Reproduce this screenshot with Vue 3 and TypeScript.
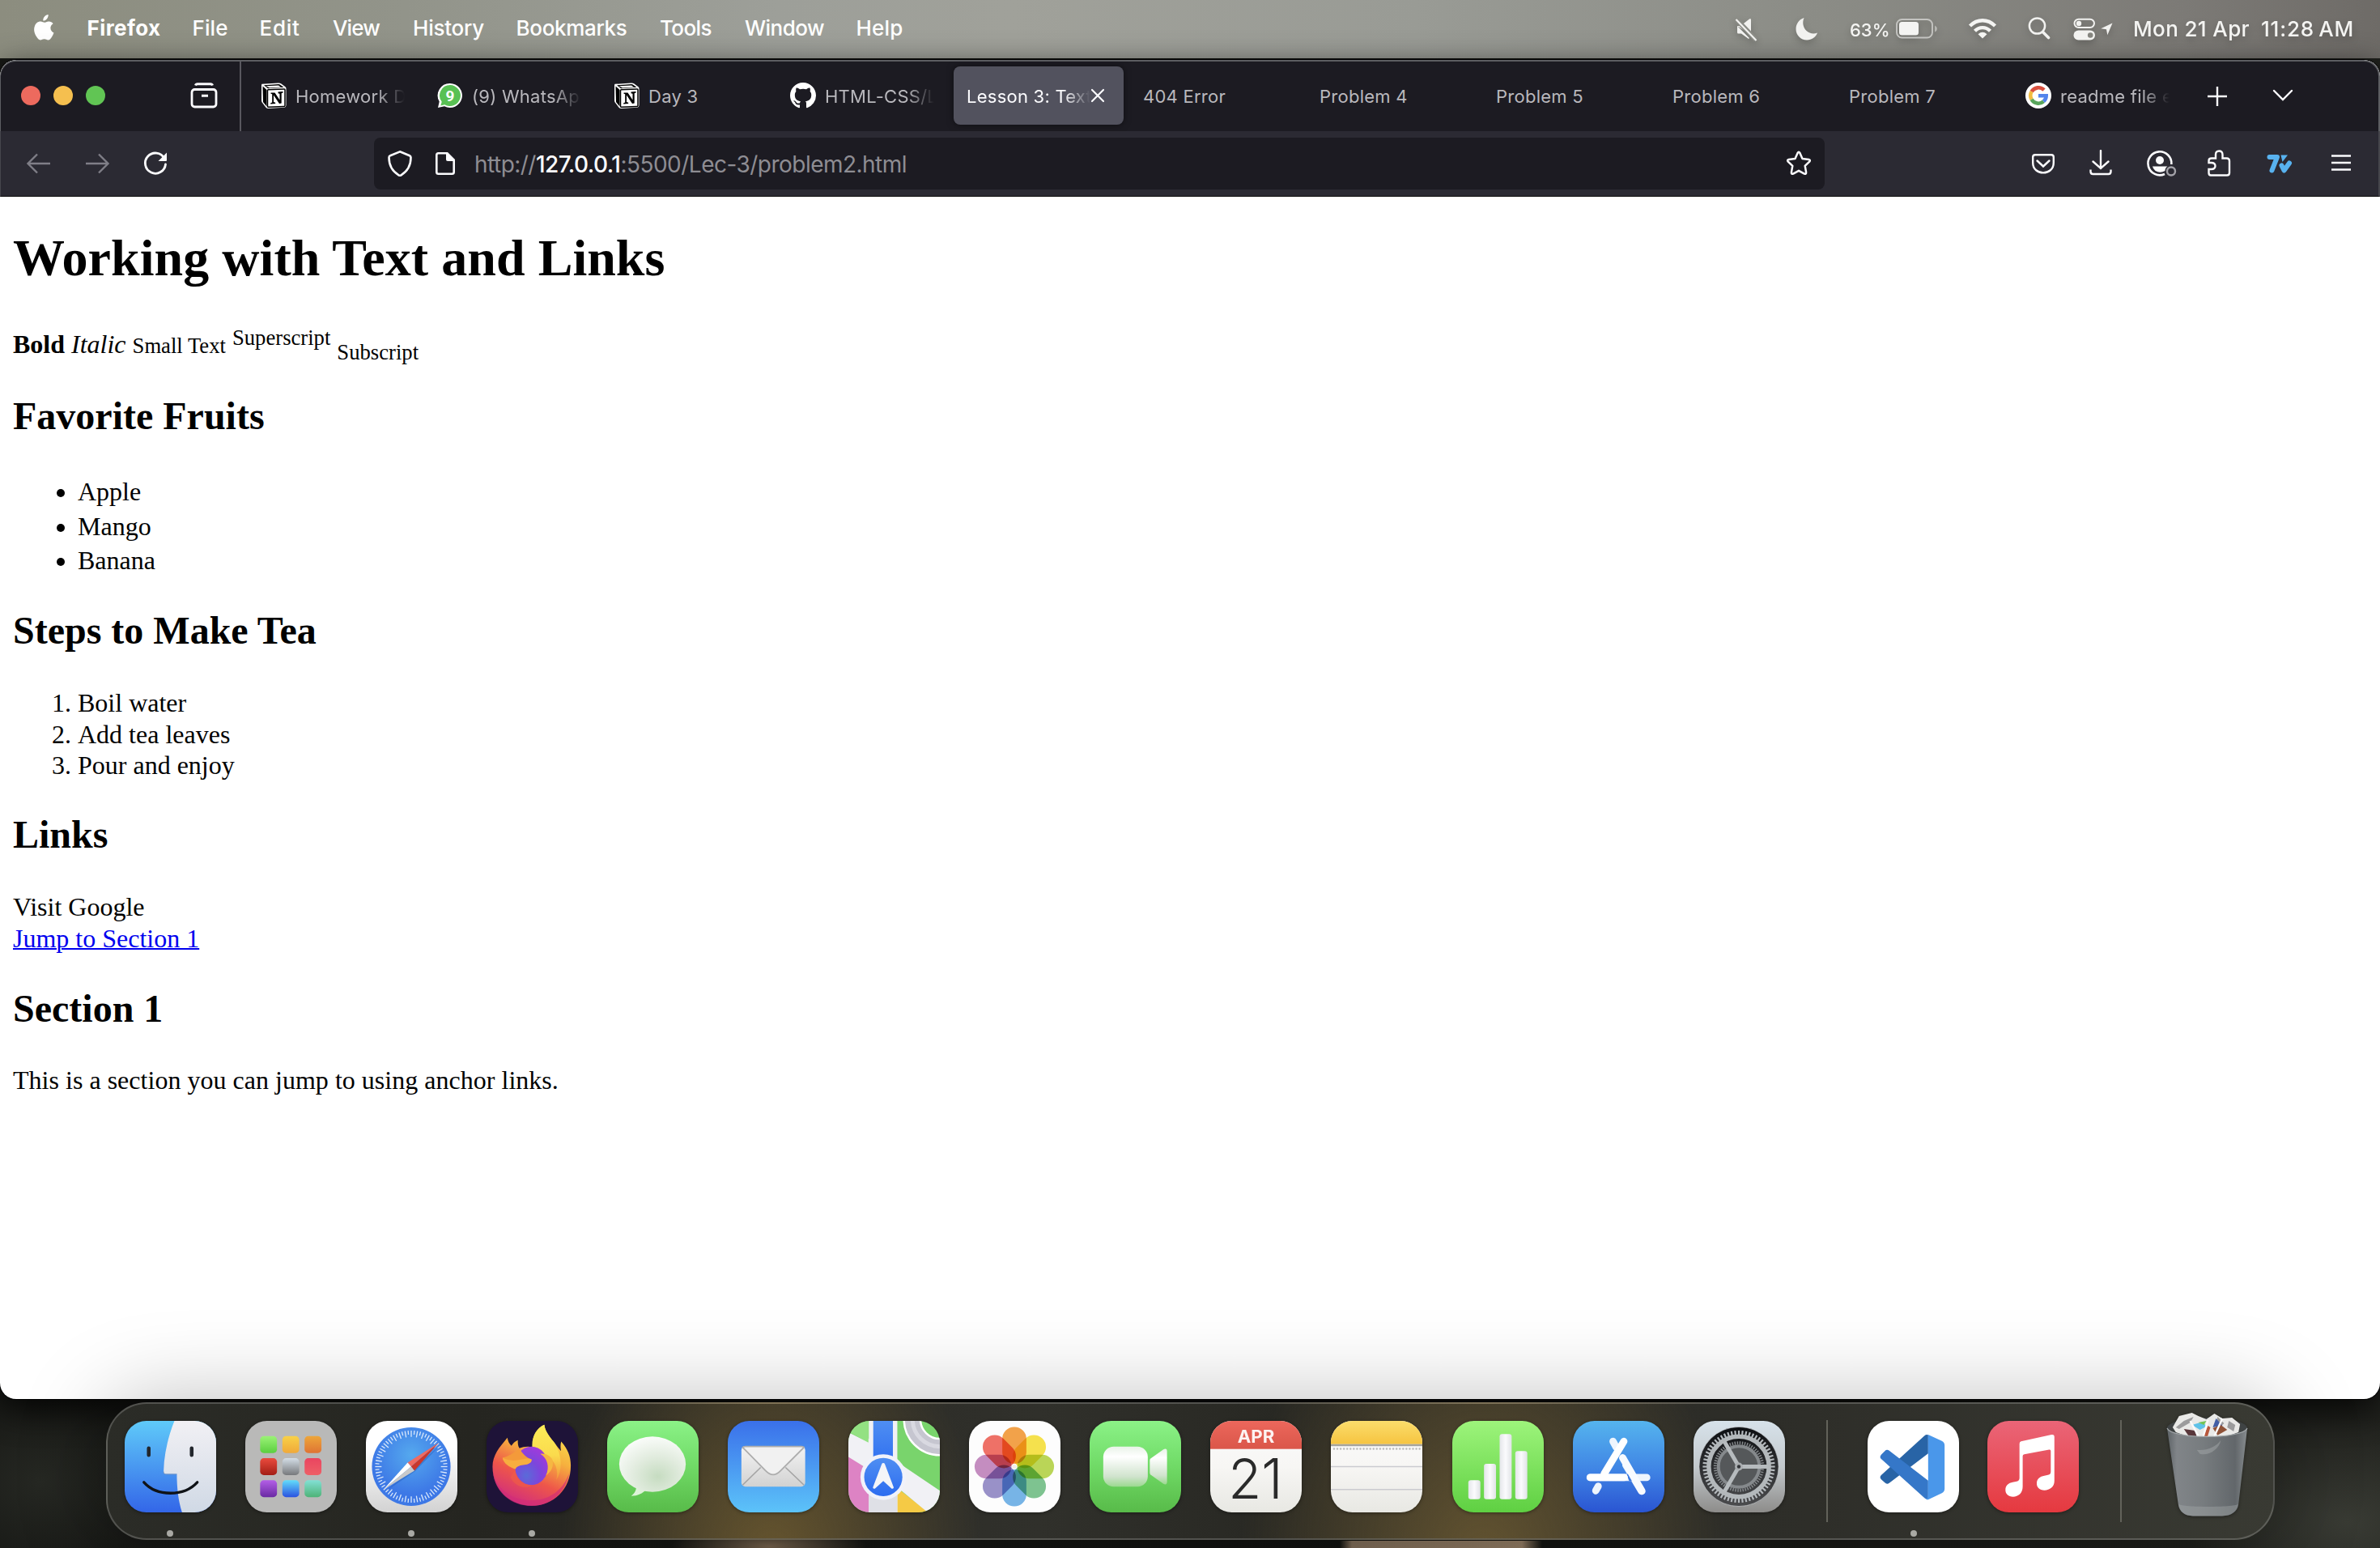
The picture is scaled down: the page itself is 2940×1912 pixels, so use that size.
<script setup lang="ts">
interface MenuEntry { label: string; pitch: number; width: number; bold?: boolean }
interface Tab { title: string; icon?: 'notion' | 'whatsapp' | 'github' | 'google'; active?: boolean; faded?: boolean }

const menu: MenuEntry[] = [
  { label: 'Firefox', pitch: 130, width: 91, bold: true },
  { label: 'File', pitch: 83, width: 44 },
  { label: 'Edit', pitch: 90.5, width: 50 },
  { label: 'View', pitch: 99, width: 58 },
  { label: 'History', pitch: 127.5, width: 88 },
  { label: 'Bookmarks', pitch: 177.5, width: 137 },
  { label: 'Tools', pitch: 105, width: 64 },
  { label: 'Window', pitch: 137.5, width: 98 },
  { label: 'Help', pitch: 80, width: 58 },
]

const tabs: Tab[] = [
  { title: 'Homework D', icon: 'notion', faded: true },
  { title: '(9) WhatsAp', icon: 'whatsapp', faded: true },
  { title: 'Day 3', icon: 'notion' },
  { title: 'HTML-CSS/L', icon: 'github', faded: true },
  { title: 'Lesson 3: Text', active: true, faded: true },
  { title: '404 Error' },
  { title: 'Problem 4' },
  { title: 'Problem 5' },
  { title: 'Problem 6' },
  { title: 'Problem 7' },
  { title: 'readme file e', icon: 'google', faded: true },
]

const padColors = [
  ['#9bf277', '#5bcf3f'], ['#f8d148', '#f0a93a'], ['#eda63a', '#df7434'],
  ['#ea4a3d', '#a31f16'], ['#d3dde6', '#77797c'], ['#ea4560', '#ee5f66'],
  ['#b35ee6', '#6a2aa3'], ['#62dcfb', '#2b52e0'], ['#82e0d4', '#4eb377'],
]
const petals = ['#f39b3a', '#f7e13e', '#b6d44a', '#74c088', '#6cb0e6', '#9189c6', '#c184bd', '#ef665b']
const ticks = Array.from({ length: 72 }, (_, i) => i)
const teeth = Array.from({ length: 60 }, (_, i) => i)
const noteDots = Array.from({ length: 27 }, (_, i) => 4 + i * 4.1)

// Spreads a label's letters so that it takes the given advance width.
const vFit = {
  mounted(el: HTMLElement, binding: { value: number }) {
    const count = (el.textContent ?? '').trim().length
    const natural = el.getBoundingClientRect().width
    el.style.letterSpacing = `${(binding.value - natural) / count}px`
  },
}
</script>

<template>
  <div class="screen">
    <header class="menubar">
      <svg class="apple" width="28" height="33" viewBox="0 0 28 33">
        <path fill="#fff" d="M19.6 0c.3 2-.5 3.900-1.700 5.300-1.100 1.400-2.900 2.500-4.600 2.300-.3-1.900.6-3.900 1.700-5.100C16.100 1.200 18.100.2 19.600 0zM25.600 11.200c-2 1.300-3.200 3-3.200 5.400 0 2.700 1.600 4.900 4.100 5.900-.6 1.900-1.500 3.700-2.700 5.400-1.200 1.700-2.400 3.500-4.400 3.500-1.900 0-2.500-1.200-4.800-1.200-2.200 0-2.900 1.200-4.700 1.200-1.900.1-3.300-1.900-4.500-3.600C2.800 24.200 1 18.700 3 14c1.100-3.300 4-5.500 7.100-5.500 2 0 3.600 1.300 4.800 1.300 1.200 0 3.100-1.500 5.500-1.400 2.100.1 4 1 5.200 2.800z" />
      </svg>
      <nav class="menu">
        <div v-for="m in menu" :key="m.label" class="menu-item" :style="{ width: m.pitch + 'px' }">
          <span v-fit="m.width" :class="{ bold: m.bold }">{{ m.label }}</span>
        </div>
      </nav>
      <div class="status">
        <svg class="s-mute" width="28" height="30" viewBox="0 0 28 30">
          <path d="M3 10h4L18 1.500Q20 0 20 3v18zM3 10v8q0 1.500 1.500 1.500H8l9 6.500 1-1z" fill="#f2f2f0" />
          <path d="M1.500 1.500 26 27" stroke="#8b8c86" stroke-width="6" />
          <path d="M1.500 2 26.500 28" stroke="#f2f2f0" stroke-width="2.200" />
        </svg>
        <svg class="s-moon" width="30" height="30" viewBox="0 0 30 30"><path d="M11.500 1C9 7 10.500 13 14.500 17c3.800 3.600 9 4.300 13.500 2.500C26 25 21 28.500 15 28.500 7.500 28.500 1.500 22.500 1.500 15 1.500 8.500 5.500 3 11.500 1z" fill="#f2f2f0" /></svg>
        <span v-fit="49" class="pct">63%</span>
        <svg class="s-batt" width="52" height="26" viewBox="0 0 52 26">
          <rect x="1" y="1" width="44" height="22.500" rx="6.500" fill="none" stroke="#c4c4c1" stroke-width="1.900" />
          <rect x="4" y="4" width="24" height="16.500" rx="3.500" fill="#f4f4f2" />
          <path d="M48 8.500q3 1.500 3 4t-3 4z" fill="#b6b6b2" />
        </svg>
        <svg class="s-wifi" width="36" height="28" viewBox="0 0 36 28">
          <g fill="none" stroke="#f4f4f2" stroke-width="4.400">
            <path d="M2.500 11C11.500 2 24.500 2 33.500 11" /><path d="M8.500 17.200C14 11.700 22 11.700 27.500 17.200" />
          </g>
          <path d="M12.500 21.200q5.500-4.800 11 0L18 26.500z" fill="#f4f4f2" />
        </svg>
        <svg class="s-search" width="28" height="28" viewBox="0 0 28 28"><g fill="none" stroke="#f2f2f0"><circle cx="11.500" cy="11" r="9.600" stroke-width="2.500" /><path d="m18.500 18.500 7 7" stroke-width="3.600" stroke-linecap="round" /></g></svg>
        <svg class="s-cc" width="28" height="28" viewBox="0 0 28 28">
          <rect x="1.500" y="1.700" width="24.500" height="10.300" rx="5.150" fill="none" stroke="#f2f2f0" stroke-width="2" />
          <circle cx="7" cy="7" r="3.200" fill="#f2f2f0" />
          <rect x=".5" y="15.500" width="26.500" height="12" rx="6" fill="#f2f2f0" />
          <circle cx="21.200" cy="21.500" r="3.300" fill="#85857f" />
        </svg>
        <svg class="s-loc" width="15" height="16" viewBox="0 0 15 16"><path d="M14.500.5 8.300 15.200 7 8.300.3 7.200z" fill="#f2f2f0" /></svg>
        <span v-fit="144" class="date">Mon 21 Apr</span>
        <span v-fit="115" class="time">11:28&#8201;AM</span>
      </div>
    </header>

    <section class="window">
      <div class="tabstrip">
        <div class="lights"><i class="red"></i><i class="yellow"></i><i class="green"></i></div>
        <svg class="box-icon" width="34" height="32" viewBox="0 0 34 32">
          <g fill="none" stroke="#fbfbfe"><rect x="2" y="8.500" width="30" height="21.500" rx="3.500" stroke-width="2.800" /><path d="M6.500 3.500Q7 1.800 9 1.800h16q2 0 2.500 1.700" stroke-width="3" /><path d="M14 16.200h8" stroke-width="3" /></g>
        </svg>
        <div class="strip-line"></div>
        <div class="tabs">
          <div v-for="t in tabs" :key="t.title" class="tab" :class="{ active: t.active }">
            <svg v-if="t.icon === 'notion'" class="fav" viewBox="0 0 32 32">
              <path d="M1.500 1.800 22 .5q2 0 3.500 1l5 3.700q1 .9 1 2.300v20.500q0 2.500-2.500 2.700L9.500 32q-2 0-3-1.300l-4-5.200Q1 24 1 22.500V4q0-2 .5-2.200z" fill="#fff" />
              <path d="M4 3.300 22 2.100q1.500 0 2.500.8l4 2.900L9 7.200z" fill="#000" /><path d="M6.500 4.300 22 3.400l3 2-14 1z" fill="#fff" />
              <path d="M2.500 4.500 7.500 9v20.500L3 24z" fill="#000" />
              <rect x="8.500" y="8" width="21.500" height="21.500" rx="1" fill="#fff" stroke="#000" stroke-width="1.500" transform="skewY(-2) translate(0 1)" />
              <path d="M12.500 12.500h5l6 9v-7.700l-2-.6v-1.600l6-.5v1.400l-1.800.8v12.200l-2.700.4-7-10.500v8.700l2.200.7v1.300l-6 .4v-1.300l2-.8V14.200l-1.700-.4z" fill="#000" />
            </svg>
            <svg v-else-if="t.icon === 'whatsapp'" class="fav" viewBox="0 0 32 32">
              <path d="M16 1a15 15 0 1 1-7 28.300L1 31l1.700-7.500A15 15 0 0 1 16 1z" fill="#fff" />
              <path d="M16 3a13 13 0 1 1-6.700 24.200l-5 1.200 1.400-4.600A13 13 0 0 1 16 3z" fill="#59c154" />
              <text x="16" y="22.500" text-anchor="middle" font-family="Roboto, sans-serif" font-weight="700" font-size="19" letter-spacing="0" fill="#fff">9</text>
            </svg>
            <svg v-else-if="t.icon === 'github'" class="fav" viewBox="0 0 16 16">
              <path fill="#fff" d="M8 0C3.580 0 0 3.580 0 8c0 3.540 2.290 6.530 5.470 7.590.4.070.55-.17.55-.38 0-.19-.01-.82-.01-1.490-2.010.37-2.530-.49-2.690-.94-.09-.23-.48-.94-.82-1.130-.28-.15-.68-.52-.01-.53.63-.01 1.080.58 1.230.82.72 1.210 1.870.87 2.330.66.070-.52.28-.87.51-1.070-1.780-.2-3.640-.89-3.640-3.950 0-.87.31-1.590.82-2.150-.08-.2-.36-1.020.08-2.120 0 0 .67-.21 2.200.82.64-.18 1.320-.27 2-.27s1.360.09 2 .27c1.530-1.040 2.200-.82 2.200-.82.44 1.100.16 1.920.08 2.120.51.56.82 1.270.82 2.150 0 3.070-1.870 3.750-3.650 3.950.29.25.54.73.54 1.480 0 1.070-.01 1.930-.01 2.200 0 .21.15.46.55.38A8.010 8.010 0 0 0 16 8c0-4.420-3.580-8-8-8z" />
            </svg>
            <svg v-else-if="t.icon === 'google'" class="fav" viewBox="0 0 32 32">
              <circle cx="16" cy="16" r="16" fill="#fff" />
              <g fill="none" stroke-width="4.600">
                <path d="M23 9.200A9.700 9.700 0 0 0 7.600 11.200" stroke="#d9503f" /><path d="M7.600 11.200a9.700 9.700 0 0 0 0 9.700" stroke="#f2bd42" />
                <path d="M7.600 20.900A9.700 9.700 0 0 0 22.400 23.300" stroke="#58a55c" /><path d="M22.400 23.300A9.700 9.700 0 0 0 25.700 16.200H16" stroke="#5384ec" />
              </g>
            </svg>
            <span class="tab-title" :class="{ faded: t.faded }">{{ t.title }}</span>
            <svg v-if="t.active" class="close" width="18" height="18" viewBox="0 0 18 18"><path d="m2 2 14 14M16 2 2 16" stroke="#fbfbfe" stroke-width="2.200" stroke-linecap="round" /></svg>
          </div>
        </div>
        <svg class="plus" width="26" height="26" viewBox="0 0 26 26"><path d="M13 1v24M1 13h24" stroke="#fbfbfe" stroke-width="2.400" /></svg>
        <svg class="chev" width="26" height="16" viewBox="0 0 26 16"><path d="m2 2 11 11L24 2" fill="none" stroke="#fbfbfe" stroke-width="2.400" stroke-linecap="round" /></svg>
      </div>

      <div class="toolbar">
        <svg class="ic back" width="32" height="32" viewBox="0 0 32 32"><path d="M30 16H3M14 4.500 2.500 16 14 27.500" fill="none" stroke="#7f7e87" stroke-width="2.400" /></svg>
        <svg class="ic fwd" width="32" height="32" viewBox="0 0 32 32"><path d="M2 16h27M18 4.500 29.500 16 18 27.500" fill="none" stroke="#7f7e87" stroke-width="2.400" /></svg>
        <svg class="ic reload" width="32" height="32" viewBox="0 0 32 32"><path d="M27 9.500A12.600 12.600 0 1 0 28.500 17" fill="none" stroke="#fbfbfe" stroke-width="2.800" stroke-linecap="round" /><path d="M30 2.500V12q0 1-1 1H19.500z" fill="#fbfbfe" /></svg>
        <div class="urlbar">
          <svg class="shield" width="32" height="34" viewBox="0 0 32 34"><path d="M16 2.300 28 7.300q1.500.7 1.500 2.300C29.500 18 25.500 26.500 17.500 31.300q-1.500 1-3 0C6.500 26.500 2.500 18 2.500 9.600 2.500 8 3 7.600 4 7.300z" fill="none" stroke="#fbfbfe" stroke-width="2.600" /></svg>
          <svg class="doc" width="26" height="30" viewBox="0 0 26 30"><path d="M15 2.300H4.500q-2.200 0-2.200 2.200v21q0 2.200 2.200 2.200h17q2.200 0 2.200-2.200V11" fill="none" stroke="#fbfbfe" stroke-width="2.600" /><path d="M14 1h2l9 9v2H16q-2 0-2-2z" fill="#fbfbfe" /></svg>
          <span v-fit="534" class="url">http://<b>127.0.0.1</b>:5500/Lec-3/problem2.html</span>
          <svg class="star" width="34" height="32" viewBox="0 0 34 32"><path d="M15.600 3q1.400-2.400 2.800 0l3.100 7 7.800 1q2.600.6.900 2.600l-5.500 5.300 1.400 7.900q.2 2.700-2.200 1.800L17 24.800l-6.900 3.800q-2.400.9-2.200-1.800l1.400-7.900-5.500-5.300q-1.700-2 .9-2.600l7.800-1z" fill="none" stroke="#fbfbfe" stroke-width="2.500" stroke-linejoin="round" /></svg>
        </div>
        <div class="actions">
          <svg width="34" height="34" viewBox="0 0 34 34"><g fill="none" stroke="#fbfbfe" stroke-width="2.400"><path d="M7 6.200h20q2.800 0 2.800 2.800v7c0 16.500-25.600 16.500-25.600 0V9q0-2.800 2.800-2.800z" /><path d="m9.500 13.500 7.500 7 7.500-7" stroke-linecap="round" /></g></svg>
          <svg class="download" width="34" height="34" viewBox="0 0 34 34"><g fill="none" stroke="#fbfbfe" stroke-width="2.400"><path d="M17 1v22M7.500 14.500 17 23l9.500-8.500" stroke-linecap="round" /><path d="M4.500 24.500V27q0 3 3 3h19q3 0 3-3v-2.500" /></g></svg>
          <svg class="account" width="40" height="36" viewBox="0 0 40 36">
            <path d="M24 31A14.500 14.500 0 1 1 32.400 19" fill="none" stroke="#fbfbfe" stroke-width="2.600" />
            <circle cx="18" cy="14" r="5" fill="#fbfbfe" /><path d="M9 21.500h18.500q-3 1.500-3 5.500-6 3.500-12 0-3-2.500-3.500-5.500z" fill="#fbfbfe" />
            <circle cx="32" cy="27.500" r="5" fill="none" stroke="#a3a2a9" stroke-width="2.400" />
          </svg>
          <svg width="34" height="34" viewBox="0 0 34 34"><path d="M8 10.500h5V6q0-4.500 4.200-4.500T21.500 6v4.500h5q3.500 0 3.500 3.300V28.500q0 3-3 3H7q-2.500 0-2.500-3V24h3q5 0 5-4t-5-4h-3v-2.500q0-3 3.500-3z" fill="none" stroke="#fbfbfe" stroke-width="2.400" /></svg>
          <svg class="seven" width="34" height="34" viewBox="0 0 34 34"><g fill="none" stroke="#58b2ef" stroke-width="6" stroke-linejoin="round" stroke-linecap="round"><path d="M4.500 9H14L7.500 25.500" /><path d="M19.500 19.500 22.500 25.500 29 16.500" /></g><path d="M18.500 6.500h8.500l-6.500 8.500z" fill="#58b2ef" /></svg>
          <svg class="burger" width="34" height="34" viewBox="0 0 34 34"><path d="M5 7.500h24M5 16h24M5 24.500h24" stroke="#fbfbfe" stroke-width="2.400" /></svg>
        </div>
      </div>

      <main class="page">
        <h1>Working with Text and Links</h1>
        <p class="styles"><b>Bold</b> <em>Italic</em> <small>Small Text</small> <sup>Superscript</sup> <sub>Subscript</sub></p>
        <h2 class="h-fruits">Favorite Fruits</h2>
        <ul><li>Apple</li><li>Mango</li><li>Banana</li></ul>
        <h2 class="h-steps">Steps to Make Tea</h2>
        <ol><li>Boil water</li><li>Add tea leaves</li><li>Pour and enjoy</li></ol>
        <h2 class="h-links">Links</h2>
        <p class="links">Visit Google<br /><a href="#section1">Jump to Section 1</a></p>
        <h2 id="section1" class="h-section">Section 1</h2>
        <p class="last">This is a section you can jump to using anchor links.</p>
      </main>
    </section>

    <footer class="dock">
      <svg width="0" height="0" class="defs">
        <defs>
          <clipPath id="tile"><rect width="114" height="114" rx="27" /></clipPath>
          <linearGradient id="gFinder" x2="0" y2="1"><stop stop-color="#5fcaf9" /><stop offset="1" stop-color="#3366e8" /></linearGradient>
          <linearGradient id="gFace" x2="0" y2="1"><stop stop-color="#f1f0f4" /><stop offset="1" stop-color="#d0d9e5" /></linearGradient>
          <linearGradient id="gWhite" x2="0" y2="1"><stop offset=".3" stop-color="#fff" /><stop offset="1" stop-color="#d2d2d2" /></linearGradient>
          <linearGradient id="gGreen" x2="0" y2="1"><stop stop-color="#8bf287" /><stop offset=".5" stop-color="#70da66" /><stop offset="1" stop-color="#58bb49" /></linearGradient>
          <linearGradient id="gMail" x2="0" y2="1"><stop stop-color="#3a70ea" /><stop offset="1" stop-color="#5cc3f9" /></linearGradient>
          <linearGradient id="gEnv" x2="0" y2="1"><stop stop-color="#f3f3f3" /><stop offset="1" stop-color="#d2d2d2" /></linearGradient>
          <radialGradient id="gSafari" cy=".35"><stop stop-color="#55a9ee" /><stop offset="1" stop-color="#3d78e6" /></radialGradient>
          <linearGradient id="gFire" x1=".75" x2=".3" y2="1"><stop stop-color="#fbe54e" /><stop offset=".35" stop-color="#f6b03e" /><stop offset=".65" stop-color="#ee564a" /><stop offset="1" stop-color="#cf2b80" /></linearGradient>
          <linearGradient id="gFlame" x2="0" y2="1"><stop stop-color="#fdec58" /><stop offset=".55" stop-color="#fadb4d" /><stop offset="1" stop-color="#f3923c" /></linearGradient>
          <radialGradient id="gGlobe" cx=".35" cy=".75" r=".8"><stop stop-color="#5a6bd8" /><stop offset=".5" stop-color="#7c46dc" /><stop offset="1" stop-color="#a23adb" /></radialGradient>
          <radialGradient id="gBubble" cx=".58" cy=".72" r=".75"><stop stop-color="#c6dcc1" /><stop offset=".5" stop-color="#e2ecdf" /><stop offset="1" stop-color="#fbfdfb" /></radialGradient>
          <linearGradient id="gCam" x2="0" y2="1"><stop stop-color="#e9f3e8" /><stop offset=".25" stop-color="#fff" /><stop offset=".75" stop-color="#d0e3cd" /><stop offset="1" stop-color="#9bd98f" /></linearGradient>
          <linearGradient id="gCal" x2="0" y2="1"><stop stop-color="#ec675c" /><stop offset="1" stop-color="#da5649" /></linearGradient>
          <linearGradient id="gPaper" x2="0" y2="1"><stop stop-color="#fbfbfb" /><stop offset=".5" stop-color="#f7f6f4" /><stop offset="1" stop-color="#e8e8e3" /></linearGradient>
          <linearGradient id="gNotes" x2="0" y2="1"><stop stop-color="#fbdd6c" /><stop offset="1" stop-color="#f6c440" /></linearGradient>
          <linearGradient id="gNum" x2="0" y2="1"><stop stop-color="#9df47b" /><stop offset="1" stop-color="#5fd042" /></linearGradient>
          <linearGradient id="gBar" x2="1" y2="0"><stop stop-color="#e4e6ea" /><stop offset=".5" stop-color="#fbfbfd" /><stop offset="1" stop-color="#e0e3e6" /></linearGradient>
          <linearGradient id="gStore" x2="0" y2="1"><stop stop-color="#55b4ee" /><stop offset=".55" stop-color="#3f83e4" /><stop offset="1" stop-color="#2a55d2" /></linearGradient>
          <linearGradient id="gSet" x2="0" y2="1"><stop stop-color="#d7e2ea" /><stop offset=".5" stop-color="#c3c9cd" /><stop offset="1" stop-color="#8d8c8a" /></linearGradient>
          <linearGradient id="gGear" x2="0" y2="1"><stop stop-color="#0d0f12" /><stop offset="1" stop-color="#4b4c4e" /></linearGradient>
          <linearGradient id="gMusic" x2="0" y2="1"><stop stop-color="#ea6577" /><stop offset="1" stop-color="#e5393f" /></linearGradient>
          <linearGradient id="gTrash" x2="1" y2="0"><stop stop-color="#5f6569" /><stop offset=".12" stop-color="#85898d" /><stop offset=".45" stop-color="#7b8083" /><stop offset=".85" stop-color="#656a6e" /><stop offset="1" stop-color="#8c9194" /></linearGradient>
          <linearGradient id="gRoute" x2="0" y2="1"><stop stop-color="#4f8ef2" /><stop offset="1" stop-color="#2c6cf0" /></linearGradient>
          <linearGradient v-for="(c, i) in padColors" :id="'pad' + i" :key="i" x2="0" y2="1"><stop :stop-color="c[0]" /><stop offset="1" :stop-color="c[1]" /></linearGradient>
        </defs>
      </svg>

      <div class="app running">
        <svg viewBox="0 0 114 114"><g clip-path="url(#tile)">
          <rect width="114" height="114" fill="url(#gFinder)" />
          <path d="M62 0C54 20 49 42 48.500 63q0 3 3 3h13.500C65 84 67 100 71.500 114H114V0z" fill="url(#gFace)" />
          <path d="M48.500 63q0 3.500 3 3.500h13.500" fill="none" stroke="#7d94b8" stroke-width="1.200" opacity=".6" />
          <path d="M30 34v8.500M83.500 34v8.500" stroke="#22262c" stroke-width="4.600" stroke-linecap="round" />
          <path d="M24 76.500C40 94.500 74 94.500 90.500 76.500" fill="none" stroke="#101317" stroke-width="3.400" stroke-linecap="round" />
        </g></svg>
      </div>
      <div class="app">
        <svg viewBox="0 0 114 114"><rect width="114" height="114" rx="27" fill="#b9b9b8" />
          <rect v-for="(c, i) in padColors" :key="i" :x="18.500 + (i % 3) * 27.700" :y="19 + Math.floor(i / 3) * 27.500" width="21" height="21" rx="4.500" :fill="`url(#pad${i})`" />
        </svg>
      </div>
      <div class="app running">
        <svg viewBox="0 0 114 114"><rect width="114" height="114" rx="27" fill="url(#gWhite)" />
          <circle cx="56.500" cy="57" r="49" fill="url(#gSafari)" />
          <path v-for="t in ticks" :key="t" :d="t % 2 ? 'M56.500 12v5' : 'M56.500 12v8'" :transform="`rotate(${t * 5} 56.500 57)`" stroke="#dbe9fb" stroke-width="1.300" />
          <path d="M24 88 92 31 61 63z" fill="#1c4ea8" opacity=".35" />
          <path d="M90.500 27.500 52 52l4.300 5z" fill="#ee6a61" /><path d="M90.500 27.500 60.500 62l-4.200-5z" fill="#c9372c" />
          <path d="M21.500 86 52 52l4.300 5z" fill="#fff" /><path d="M21.500 86 60.500 62l-4.200-5z" fill="#c9c9c9" />
        </svg>
      </div>
      <div class="app running">
        <svg viewBox="0 0 114 114"><rect width="114" height="114" rx="27" fill="#1e1338" />
          <path d="M26 21C27 26 28 28 31 31c2-3 4-5 8-7 0 4 0 7 2 10 5-2 12-3 17-1C56 20 62 9 72 4.700c1 9 7 15 13 23 3 4 6 8 8 10-1-4-1-8 0-12 8 9 12 18 12 30 0 30-22 50-48.500 50S7.500 86 7.500 57C7.500 43 16 33 26 21z" fill="url(#gFire)" />
          <path d="M8 63c4 22 24 37 50 36 22-1 38-14 45-34-4 24-24 41-46.500 41C31 106 10 89 8 63z" fill="#d12c78" opacity=".65" />
          <path d="M57 33C56 20 62 9 72 4.700c1 9 7 15 13 23 9 14 10 34 2 46C91 56 82 44 68 42c8 8 9 22 3 31-2-20-6-32-14-40z" fill="url(#gFlame)" />
          <ellipse cx="56" cy="56" rx="21" ry="24" fill="url(#gGlobe)" />
          <path d="M67 41c9 5 12 17 7 27 8-5 10-13 8-20-3-5-9-8-15-7z" fill="#f6b742" />
          <path d="M20 46c7-2 13-5 21-12 3 6 9 12 15 14 1 5-6 7-12 7-4 1-7 2-8 5-7-2-15-7-16-14z" fill="#f49a3a" />
          <path d="M20 46c8 4 14 4 24 2 5-1 9-2 12 0 1 5-6 7-12 7-4 1-7 2-8 5-7-2-15-7-16-14z" fill="#f7ae40" />
          <path d="M36 60c0 12 8 20 21 20-9 6-23 1-27-10z" fill="#ee5b49" opacity=".7" />
        </svg>
      </div>
      <div class="app">
        <svg viewBox="0 0 114 114"><rect width="114" height="114" rx="27" fill="url(#gGreen)" />
          <path d="M36 78c1 8-1 12-6 15.500 8 0 14-3 19-8z" fill="#dcf3d8" /><ellipse cx="56.500" cy="54" rx="41.500" ry="34.500" fill="url(#gBubble)" />
        </svg>
      </div>
      <div class="app">
        <svg viewBox="0 0 114 114"><rect width="114" height="114" rx="27" fill="url(#gMail)" />
          <rect x="17" y="31.500" width="79.500" height="50.500" rx="5" fill="url(#gEnv)" />
          <path d="M18.500 80 41 58M95 80 72 58" stroke="#a4a4a4" stroke-width="1.600" />
          <path d="M18.500 33 47 62q9.500 10 19 0L95 33q-1-1-3-1.200H22q-2.500 0-3.500 1.200z" fill="#f1f1f1" stroke="#adadad" stroke-width="1.800" />
        </svg>
      </div>
      <div class="app">
        <svg viewBox="0 0 114 114"><g clip-path="url(#tile)">
          <rect width="114" height="114" fill="#79d46c" /><path d="M0 0h26v28L0 13z" fill="#93e182" />
          <path d="M0 44 26 61v53H0z" fill="#dd83c4" /><path d="M60 83 100 114H60z" fill="#f5ca45" />
          <path d="M0 14 25 27v-5L71 58l43 29v28h-14L60 82 0 45z" fill="#f1f1f5" />
          <path d="M25.500 0H61v114H25.500z" fill="#f1f1f5" /><path d="M25.500 85H61v29H25.500z" fill="#dfe0e6" />
          <circle cx="114" cy="-2" r="34.500" fill="none" stroke="#fff" stroke-width="23" /><circle cx="114" cy="-2" r="34.500" fill="none" stroke="#c6c6d0" stroke-width="18" /><circle cx="114" cy="-2" r="34" fill="none" stroke="#d9d9e1" stroke-width="5" />
          <path d="M31 0h24.500v60H31z" fill="url(#gRoute)" />
          <circle cx="43.500" cy="70" r="28.500" fill="#f1f2fa" /><circle cx="43.500" cy="70" r="23.800" fill="url(#gRoute)" />
          <path d="M43.500 52.500q1.500 0 2 1.500l11 29q-.5 2-2.500 1.500L43.500 75 33 84.500q-2 .5-2.500-1.500l11-29q.5-1.500 2-1.500z" fill="#f4f5f8" />
        </g></svg>
      </div>
      <div class="app">
        <svg viewBox="0 0 114 114"><rect width="114" height="114" rx="27" fill="#fdfdfd" />
          <g class="petals"><rect v-for="(c, i) in petals" :key="c" x="41.500" y="7.500" width="30" height="46" rx="15" :fill="c" :transform="`rotate(${i * 45} 56.500 57)`" /></g>
          <circle cx="56.500" cy="57" r="2.600" fill="#f2efe6" />
        </svg>
      </div>
      <div class="app">
        <svg viewBox="0 0 114 114"><rect width="114" height="114" rx="27" fill="url(#gGreen)" />
          <rect x="17" y="32" width="55.500" height="50" rx="13" fill="url(#gCam)" /><path d="M76 47 92 35.500q4.500-2 4.500 2.500v38q0 4.500-4.500 2.500L76 67q-1-1-1-2.500v-15q0-1.500 1-2.500z" fill="url(#gCam)" />
        </svg>
      </div>
      <div class="app">
        <svg viewBox="0 0 114 114"><g clip-path="url(#tile)"><rect width="114" height="114" fill="url(#gPaper)" /><rect width="114" height="35" fill="url(#gCal)" /></g>
          <text x="34" y="27.500" textLength="46" lengthAdjust="spacingAndGlyphs" class="cal-month">APR</text>
          <text x="22.500" y="96.500" textLength="68" lengthAdjust="spacingAndGlyphs" class="cal-day">21</text>
        </svg>
      </div>
      <div class="app">
        <svg viewBox="0 0 114 114"><g clip-path="url(#tile)"><rect width="114" height="114" fill="url(#gPaper)" /><rect width="114" height="29" fill="url(#gNotes)" /><rect y="29" width="114" height="2.500" fill="#a5a49c" />
          <circle v-for="x in noteDots" :key="x" :cx="x" cy="34.800" r="1.200" fill="#b9b9b9" />
          <path d="M0 57h114M0 85.500h114" stroke="#cbcbd0" stroke-width="1.600" /></g>
        </svg>
      </div>
      <div class="app">
        <svg viewBox="0 0 114 114"><rect width="114" height="114" rx="27" fill="url(#gNum)" />
          <g fill="url(#gBar)"><rect x="20" y="74" width="15" height="23.500" rx="3" /><rect x="39.500" y="53.500" width="15" height="44" rx="3" /><rect x="59" y="16.500" width="15" height="81" rx="3" /><rect x="78.500" y="37.500" width="15" height="60" rx="3" /></g>
        </svg>
      </div>
      <div class="app">
        <svg viewBox="0 0 114 114"><rect width="114" height="114" rx="27" fill="url(#gStore)" />
          <g stroke="#eef5fd" stroke-width="9" stroke-linecap="round"><path d="M50 25.500 54 33" /><path d="M66 55 85.500 87.500M21.500 70.500H92" /><path d="M31.500 81.500 28.500 87" /></g>
          <path d="M71 66 67 66 70 75 77 75z" fill="#3a78e0" />
          <path d="M63.500 25.500 39 66" stroke="#fff" stroke-width="9" stroke-linecap="round" />
          <path d="M21.500 70.500H64" stroke="#fff" stroke-width="9" stroke-linecap="round" /><path d="M62 46 86 87.500" stroke="#f8fbff" stroke-width="9" stroke-linecap="round" />
        </svg>
      </div>
      <div class="app">
        <svg viewBox="0 0 114 114"><rect width="114" height="114" rx="27" fill="url(#gSet)" />
          <circle cx="56.500" cy="57" r="49.500" fill="url(#gGear)" />
          <path v-for="t in teeth" :key="t" d="M56.500 12v7" :transform="`rotate(${t * 6} 56.500 57)`" stroke="#b4b9bd" stroke-width="2.200" />
          <circle cx="56.500" cy="57" r="37.500" fill="none" stroke="#b3b8bb" stroke-width="5.500" />
          <circle cx="56.500" cy="57" r="25.500" fill="#55585a" stroke="#85898c" stroke-width="4" /><circle cx="56.500" cy="57" r="29.500" fill="none" stroke="#85898c" stroke-width="4" stroke-dasharray="1.500 1.600" />
          <g stroke="#b6bbbe" stroke-width="5"><path d="M56.500 57H93" /><path d="M56.500 57H93" transform="rotate(120 56.500 57)" /><path d="M56.500 57H93" transform="rotate(240 56.500 57)" /></g>
          <circle cx="56.500" cy="57" r="5" fill="#a9adb0" /><circle cx="56.500" cy="57" r="2.200" fill="#33363a" />
          <circle cx="56.500" cy="57" r="49.500" fill="none" stroke="#d4d8db" stroke-width="1" opacity=".6" />
        </svg>
      </div>
      <div class="sep s1"></div>
      <div class="app running vscode">
        <svg viewBox="0 0 114 114"><rect width="114" height="114" rx="27" fill="#fff" />
          <path d="M75.500 17.500V40.500L27 77.500q-3 2-5.500-.5l-4.500-4q-2.500-3 0-5.500L71 18.500q2-1.800 4.500-1z" fill="#2864a6" />
          <path d="M75.500 97V74.500L27 37q-3-2-5.500.5L17 42q-2.500 3 0 5.500L71 96q2 1.800 4.500 1z" fill="#3577c8" />
          <path d="M75.500 17.200 92.500 25q3.500 1.700 3.500 5.500v54q0 3.800-3.500 5.500L75.500 98q-1.500.5-3-.5 3-.3 3-4z" fill="#4a97ea" />
        </svg>
      </div>
      <div class="app">
        <svg viewBox="0 0 114 114"><rect width="114" height="114" rx="27" fill="url(#gMusic)" />
          <path d="M42 25.500 80 17.200q3.500-.7 3.500 2.800V75c0 7-5.500 11.500-12.500 11.500-6 0-9.500-3.500-9.500-8.500 0-6 4-8.500 9.500-9.600l4.500-1c2.500-.6 3.500-1.800 3.500-4.400V37.500q0-2-2-1.600L46 41.500q-2 .4-2 2.400V82c0 8-5.500 12.500-12 12.500-6 0-9.500-3.500-9.500-8.500 0-6 4-8.500 9-9.600l5-1c2.500-.6 3.500-2 3.500-4.400V28.500q0-2.500 2-3z" fill="#fff" />
        </svg>
      </div>
      <div class="sep s2"></div>
      <div class="app trash">
        <svg viewBox="0 0 114 114">
          <ellipse cx="57" cy="9" rx="50" ry="13" fill="#3f4344" />
          <path d="M14 8 22-6 38-10 46-6 56-2 66-9 76-3 88-4 98 4 96 14 80 20H34L18 14z" fill="#e9e9e7" />
          <path d="M18 8 28 0l12-5-4 7-14 8zM70-5l8 8-6 6-4-5zM84 0l8 5-2 8-8-5z" fill="#9b9b9c" />
          <path d="m38 5 14-4 4 6-8 4z" fill="#5ec2e8" /><path d="m46 2 10-2-3 5z" fill="#73c455" /><path d="m68-3 8 9-12 2z" fill="#435fa5" /><path d="m64 9 10-4 8 6-12 7z" fill="#8f5237" /><path d="m28 10 14 2 2 8-10-1z" fill="#59373b" /><path d="m52 20 6-14 3 2-4 13z" fill="#b8573c" />
          <path d="M58-1 52 20M76-3 66 19M36 0 46 19" stroke="#fafafa" stroke-width="2.500" />
          <path d="M7 9C13 23 101 23 107 9L96 104c-1 9-9 14.500-20 14.500H39c-10 0-17-5.500-18-14.500z" fill="url(#gTrash)" opacity=".96" />
          <path d="M7 9C13 23 101 23 107 9" fill="none" stroke="#a5aaac" stroke-width="1.200" />
          <path d="M21.500 104c6 4 68 4 74 0-1 9-9 14.500-20 14.500h-36c-10 0-17-5.500-18-14.500z" fill="#a4a9ad" opacity=".4" />
          <path d="M44 36c10 2 24-3 30-12-2 12-16 20-26 17z" fill="#a3a8aa" opacity=".5" />
        </svg>
      </div>
    </footer>
  </div>
</template>

<style>
html, body { margin: 0; overflow: hidden; background: #161714; }
</style>

<style scoped>
.screen {
  width: 2940px; height: 1912px; display: flex; flex-direction: column; overflow: hidden;
  font-family: Inter, "Liberation Sans", sans-serif;
  background:
    radial-gradient(ellipse 120px 30px at 950px 1910px, #75624c, transparent),
    linear-gradient(90deg, transparent 1655px, #7d6b57 1670px, #8f7a62 1880px, transparent 1905px) 0 1903px / 100% 9px no-repeat,
    radial-gradient(ellipse 140px 120px at 50px 1830px, #262823, transparent),
    radial-gradient(ellipse 200px 130px at 2900px 1880px, #393b34, transparent),
    linear-gradient(90deg, #171815, #11120f 60%, #20211d);
}
.menubar {
  height: 72px; flex: none; display: flex; align-items: center; color: #fff; font-size: 26px; font-weight: 500;
  background: linear-gradient(90deg, #8c8d7f 0, #92948a 500px, #9d9f99 960px, #a0a19a 1250px, #999b95 1750px, #8b8c86 2250px, #7c7a76 2700px, #6e6b67 2940px);
}
.apple { margin: -3px 39.500px 0 40px; flex: none; }
.menu { display: flex; }
.menu-item { flex: none; white-space: nowrap; line-height: 72px; margin-top: -2px; }
.menu-item span, .pct, .date, .time, .url { display: inline-block; white-space: nowrap; }
.bold { font-weight: 700; }
.status { display: flex; align-items: center; margin-left: auto; color: #f4f4f2; filter: drop-shadow(0 4px 4px rgba(0, 0, 0, .2)); }
.status svg { flex: none; }
.s-mute { margin-top: 1px; }
.s-moon { margin-left: 46px; }
.pct { font-size: 22px; margin-left: 38px; margin-top: 1px; width: 49px; }
.s-batt { margin-left: 8px; }
.s-wifi { margin-left: 37px; margin-top: -2px; }
.s-search { margin-left: 38px; margin-top: -2px; }
.s-cc { margin-left: 28px; }
.s-loc { margin-left: 6px; }
.date { margin-left: 25px; margin-top: -2px; }
.time { margin-left: 14px; margin-right: 32px; margin-top: -2px; }

.window {
  height: 1654px; flex: none; margin-top: 2px; box-sizing: border-box; border-radius: 20px; overflow: hidden;
  background: #fff; box-shadow: 0 0 0 1px #000, 0 12px 40px rgba(0, 0, 0, .8); display: flex; flex-direction: column;
}
.tabstrip {
  height: 88px; box-sizing: border-box; flex: none; display: flex; align-items: center; background: #1c1b22;
  border: solid #5d5e62; border-width: 2px 2px 0 1px; border-radius: 20px 20px 0 0;
}
.lights { display: flex; gap: 16px; margin-left: 25px; margin-top: -2px; }
.lights i { width: 24px; height: 24px; border-radius: 50%; }
.red { background: #ed6a5e; } .yellow { background: #f5bf4f; } .green { background: #61c554; }
.box-icon { margin-left: 105px; margin-top: -3px; }
.strip-line { width: 2px; height: 86px; background: #59585f; margin-left: 27px; }
.tabs { display: flex; gap: 8px; margin-left: 8px; margin-top: -2px; }
.tab {
  width: 210px; height: 72px; box-sizing: border-box; padding: 0 16px; display: flex; align-items: center;
  border-radius: 8px; color: #b9b8bd; font-size: 22px; letter-spacing: .25px;
}
.fav { width: 32px; height: 32px; flex: none; margin-right: 11px; }
.tab-title { flex: 1; min-width: 0; overflow: hidden; white-space: nowrap; line-height: 32px; padding-top: 2px; }
.faded { mask-image: linear-gradient(90deg, #000 calc(100% - 34px), transparent); }
.active { background: #52525e; color: #fbfbfe; box-shadow: 0 0 8px rgba(0, 0, 0, .5); }
.close { flex: none; margin-right: 7px; margin-left: 0; margin-top: -1px; }
.plus { margin-left: 30px; }
.chev { margin-left: 55px; margin-top: -3px; }

.toolbar {
  height: 81px; box-sizing: border-box; flex: none; display: flex; align-items: center; background: #2b2a33;
  border: solid #46464c; border-width: 0 2px 0 1px; border-bottom: 1px solid #0c0c0d;
}
.ic { flex: none; }
.back { margin-left: 31px; } .fwd { margin-left: 39.500px; } .reload { margin-left: 40.500px; }
.urlbar { width: 1792px; height: 64px; margin-left: 254px; border-radius: 8px; background: #1c1b22; display: flex; align-items: center; flex: none; }
.shield { margin-left: 16px; } .doc { margin-left: 27px; }
.url { margin-left: 23px; margin-top: 1px; font-size: 28px; color: #8e8d93; }
.url b { color: #fbfbfe; font-weight: 500; }
.star { margin-left: auto; margin-right: 15px; }
.actions { display: flex; align-items: center; margin-left: 253px; gap: 39px; flex: none; }
.actions svg { flex: none; }
.download { margin-left: -2px; }
.account { margin: 0 -5px 0 -1px; }
.seven { margin-left: 2px; }
.burger { margin-left: 3px; }

.page { flex: 1; padding: 38.500px 16px 0; display: flow-root; color: #000; font-family: "Liberation Serif", serif; font-size: 32px; }
.page h1 { margin: 0; font-size: 64px; line-height: 74px; letter-spacing: .06px; }
.page h2 { margin: 0; font-size: 48px; line-height: 56px; }
.page p, .page ul, .page ol { margin: 0; }
.page .styles { margin-top: 50.500px; line-height: 38px; }
small, sup, sub { font-size: 26.670px; line-height: 0; }
sup { vertical-align: 10px; } sub { vertical-align: -7.500px; }
.page .h-fruits { margin-top: 42px; }
.page ul { margin-top: 44px; line-height: 42.500px; padding-left: 80px; }
.page .h-steps { margin-top: 37.500px; }
.page ol { margin-top: 42px; line-height: 38.500px; padding-left: 80px; }
.page .h-links { margin-top: 38.500px; }
.page .links { margin-top: 42px; line-height: 39px; }
.page a { color: #0000ee; text-decoration: underline; text-decoration-thickness: 2px; }
.page .h-section { margin-top: 38.500px; }
.page .last { margin-top: 41.500px; line-height: 39px; letter-spacing: .02px; }

.dock {
  position: relative; width: 2679px; height: 170px; box-sizing: border-box; flex: none; margin: 4px 0 0 131px;
  border: 2px solid rgba(255, 255, 255, .19); border-radius: 50px; display: flex; padding: 21px 0 0 20.500px;
  box-shadow: 0 0 110px rgba(0, 0, 0, .27);
  background:
    radial-gradient(ellipse 260px 340px at 820px 190px, rgba(112, 92, 48, .85), transparent),
    radial-gradient(ellipse 300px 360px at 1700px 190px, rgba(108, 90, 50, .85), transparent),
    linear-gradient(90deg, #2b2c27, #252520 450px, #30302b 1150px, #282823 1450px, #2e2e29 2100px, #393a33 2680px);
}
.defs { position: absolute; }
.app { position: relative; width: 113px; height: 113px; margin-right: 36.100px; flex: none; }
.app svg { display: block; width: 113px; height: 113px; overflow: visible; filter: drop-shadow(0 1px 2px rgba(0, 0, 0, .4)); }
.running::after { content: ""; position: absolute; left: 52.500px; bottom: -30px; width: 8px; height: 8px; border-radius: 50%; background: #a9a9a4; }
.vscode { margin-right: 35px; }
.sep { width: 2px; height: 126px; background: #62625a; flex: none; }
.s1 { margin: -1px 49.500px 0 15px; }
.s2 { margin: -1px 49px 0 15px; }
.petals rect { mix-blend-mode: multiply; opacity: .92; }
.cal-month { font-size: 21px; font-weight: 700; fill: #fdf3f2; }
.cal-day { font-size: 70px; font-weight: 300; fill: #2a2a2a; }
</style>
